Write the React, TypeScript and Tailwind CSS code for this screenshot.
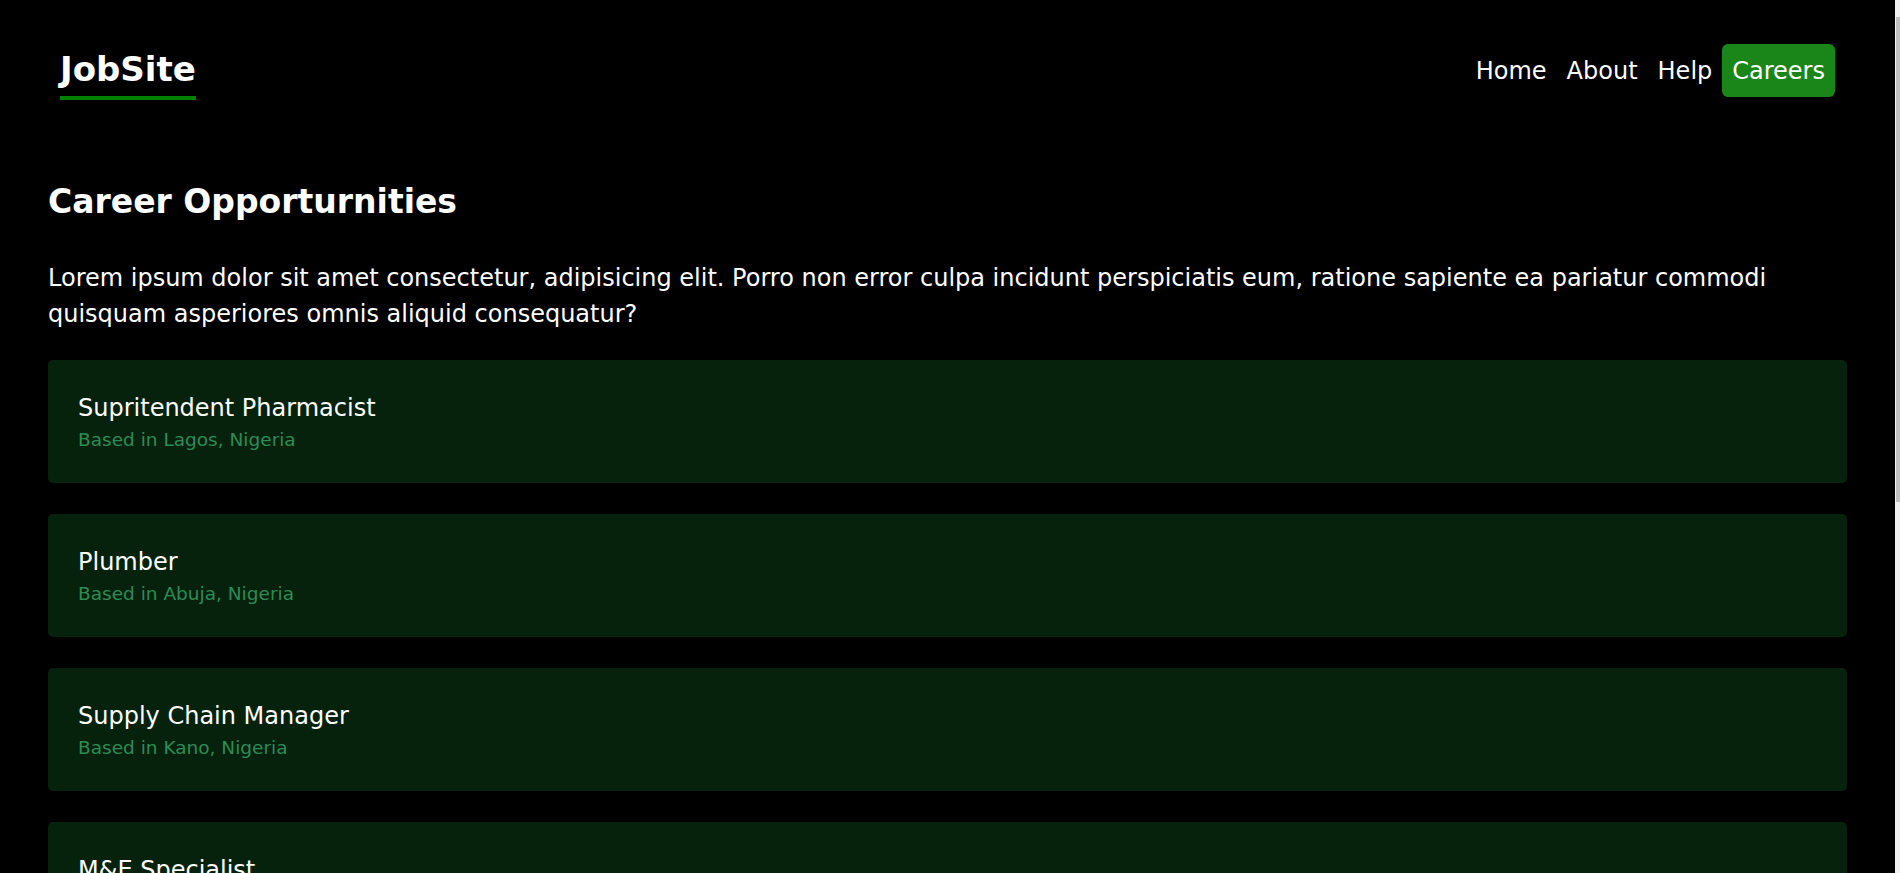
const jobs = [
  { title: 'Supritendent Pharmacist', location: 'Based in Lagos, Nigeria' },
  { title: 'Plumber', location: 'Based in Abuja, Nigeria' },
  { title: 'Supply Chain Manager', location: 'Based in Kano, Nigeria' },
  { title: 'M&E Specialist', location: 'Based in Ibadan, Nigeria' },
  { title: 'Data Analyst', location: 'Based in Enugu, Nigeria' },
];

function Header() {
  return (
    <header className="flex items-start justify-between px-[60px] pt-[44px]">
      <div className="mt-[5px] border-b-4 border-[#008000] pb-[7px]">
        <span className="block text-[34px] font-bold leading-[40px] text-white">JobSite</span>
      </div>
      <nav className="flex items-center text-[24px] leading-[53px] text-white">
        <a href="#" className="px-[10px] pt-[2px] leading-[51px]">Home</a>
        <a href="#" className="px-[10px] pt-[2px] leading-[51px]">About</a>
        <a href="#" className="px-[10px] pt-[2px] leading-[51px]">Help</a>
        <a href="#" className="rounded-[6px] bg-[#1a861a] px-[10px] pt-[2px] leading-[51px]">Careers</a>
      </nav>
    </header>
  );
}

function JobCard({ title, location }: { title: string; location: string }) {
  return (
    <div className="mb-[31px] rounded-[5px] bg-[#06220d] p-[30px]">
      <h3 className="text-[24px] leading-[36px] text-white">{title}</h3>
      <p className="text-[18.5px] leading-[27px] text-[#2e8b57]">{location}</p>
    </div>
  );
}

export default function App() {
  return (
    <div className="flex h-[873px] overflow-hidden bg-black font-['DejaVu_Sans',sans-serif]">
      <div className="flex-1">
        <Header />

        <main className="px-12 pt-[78px]">
          <h1 className="text-[33px] font-bold leading-[48px] text-white">Career Opporturnities</h1>
          <p className="mt-[34px] text-[24px] leading-[36px] text-white">
            Lorem ipsum dolor sit amet consectetur, adipisicing elit. Porro non error culpa incidunt perspiciatis eum,
            ratione sapiente ea pariatur commodi quisquam asperiores omnis aliquid consequatur?
          </p>

          <div className="mt-[28px]">
            {jobs.map((job) => (
              <JobCard key={job.title} title={job.title} location={job.location} />
            ))}
          </div>
        </main>
      </div>

      {/* page scrollbar, cut off at the right edge */}
      <div className="flex w-[5px] bg-[#f1f1f1] pl-[1px] pt-[17px]">
        <div className="h-[485px] w-full bg-[#c1c1c1]" />
      </div>
    </div>
  );
}
